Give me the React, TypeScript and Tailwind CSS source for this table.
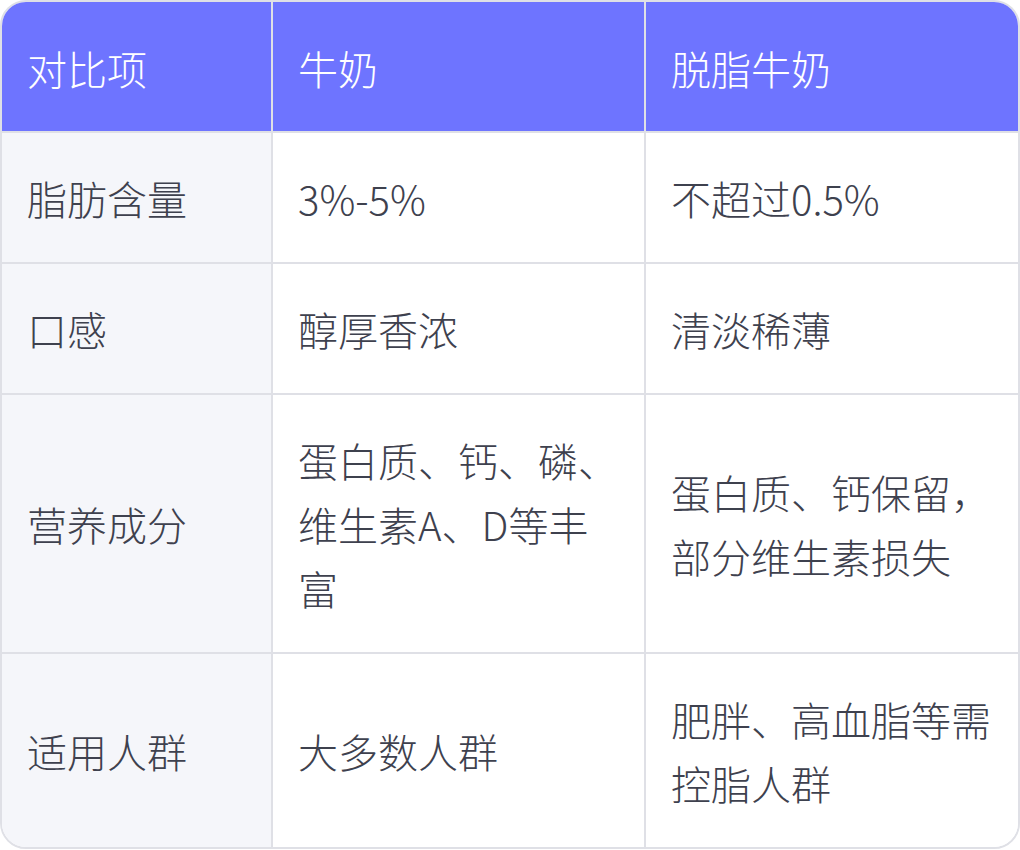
import React from "react";

const rows: [string, string, string][] = [
  ["脂肪含量", "3%-5%", "不超过0.5%"],
  ["口感", "醇厚香浓", "清淡稀薄"],
  ["营养成分", "蛋白质、钙、磷、维生素A、D等丰富", "蛋白质、钙保留，部分维生素损失"],
  ["适用人群", "大多数人群", "肥胖、高血脂等需控脂人群"],
];

export default function App() {
  return (
    <div
      className="w-[1020px] h-[850px] bg-white"
      style={{ fontFamily: '"Noto Sans CJK SC", "Noto Sans", sans-serif' }}
    >
      <div className="w-[1020px] border-2 border-[#dfe0e6] rounded-[26px] overflow-hidden">
        <div className="grid grid-cols-[271px_373px_1fr] text-[40px] leading-[64px] font-extralight">
          <div className="bg-[#6e74ff] text-white px-[25px] pt-[34px] pb-[31px] border-r-2 border-b-2 border-[#dfe0e6]">对比项</div>
          <div className="bg-[#6e74ff] text-white px-[25px] pt-[34px] pb-[31px] border-r-2 border-b-2 border-[#dfe0e6]">牛奶</div>
          <div className="bg-[#6e74ff] text-white px-[25px] pt-[34px] pb-[31px] border-b-2 border-[#dfe0e6]">脱脂牛奶</div>
          {rows.map((r, i) => {
            const last = i === rows.length - 1;
            const b = last ? "" : "border-b-2";
            return (
              <React.Fragment key={i}>
                <div className={`bg-[#f5f6fa] text-[#3e414e] px-[25px] py-[32.5px] border-r-2 ${b} border-[#dfe0e6] flex items-center`}>
                  {r[0]}
                </div>
                <div className={`bg-white text-[#3e414e] px-[25px] py-[32.5px] border-r-2 ${b} border-[#dfe0e6] flex items-center`}>
                  <span>{r[1]}</span>
                </div>
                <div className={`bg-white text-[#3e414e] px-[25px] py-[32.5px] ${b} border-[#dfe0e6] flex items-center`}>
                  <span>{r[2]}</span>
                </div>
              </React.Fragment>
            );
          })}
        </div>
      </div>
    </div>
  );
}
